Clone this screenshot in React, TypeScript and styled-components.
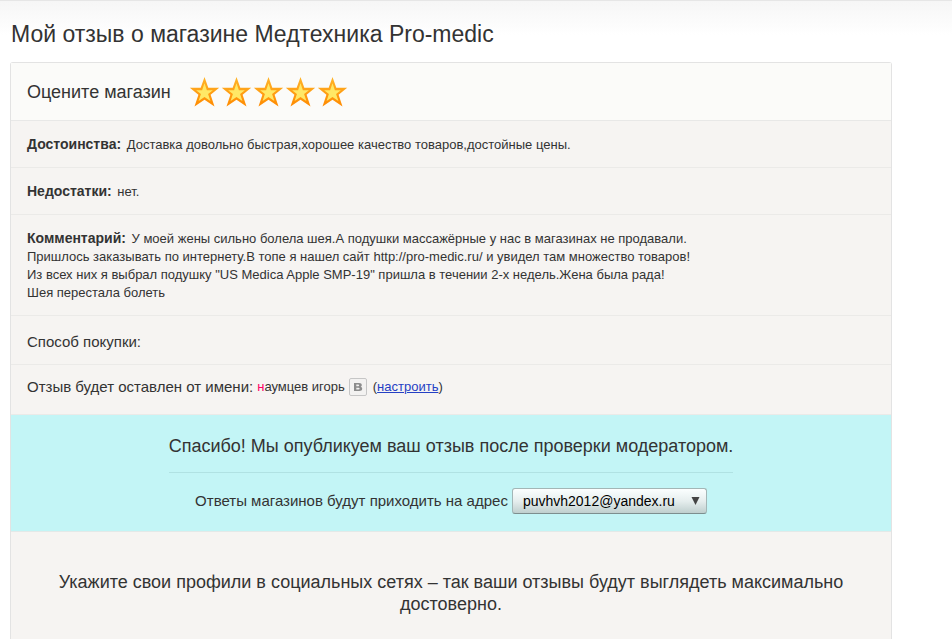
import React, { useState } from 'react';
import styled, { createGlobalStyle } from 'styled-components';

const GlobalStyle = createGlobalStyle`
  * { box-sizing: border-box; }
  body {
    margin: 0;
    background: #fff;
    color: #333;
    font-family: "Liberation Sans", Arial, sans-serif;
    font-size: 13px;
    line-height: 18px;
  }
`;

const Page = styled.main`
  min-height: 100vh;
  padding: 20px 60px 0 10px;
  border-top: 1px solid #e6e6e6;
  background: linear-gradient(#f6f6f6, #fff 34px) no-repeat;
`;

const Title = styled.h1`
  margin: 0 0 15px 1px;
  font-size: 23px;
  line-height: 26px;
  font-weight: 400;
`;

const Panel = styled.section`
  border: 1px solid #e3e3e3;
  border-bottom: 0;
  border-radius: 3px 3px 0 0;
  background: #f6f4f2;
`;

const Rating = styled.div`
  display: flex;
  align-items: center;
  gap: 18px;
  height: 58px;
  padding: 0 16px;
  border-bottom: 1px solid #e8e8e7;
  background: #fbfbf9;
`;

const RatingTitle = styled.h2`
  margin: 0;
  font-size: 18px;
  line-height: 22px;
  font-weight: 400;
`;

const Stars = styled.div`
  display: flex;
`;

const StarLabel = styled.label`
  position: relative;
  display: block;
  width: 32px;
  height: 30px;
  cursor: pointer;
`;

const StarInput = styled.input`
  position: absolute;
  inset: 0;
  margin: 0;
  opacity: 0;
  cursor: pointer;
`;

const Row = styled.div`
  padding: 15px 16px 13px;
  border-bottom: 1px solid #ebeae8;
  white-space: pre-line;
`;

const Term = styled.strong`
  margin-right: 2px;
  font-size: 14px;
  line-height: 16px;
`;

const Purchase = styled.div`
  padding: 17px 16px 13px;
  border-bottom: 1px solid #ebeae8;
  font-size: 15px;
`;

const Author = styled.div`
  display: flex;
  align-items: center;
  height: 50px;
  padding: 0 16px 6px;
  border-bottom: 1px solid #ebeae8;
`;

const Caption = styled.span`
  font-size: 15px;
`;

const Name = styled.span`
  display: inline-block;
  margin: 0 4px;

  &::first-letter { color: #f06; }
`;

const VkBadge = styled.svg`
  display: block;
  width: 18px;
  height: 18px;
  margin-right: 6px;
`;

const SetupLink = styled.a`
  color: #2540c4;
`;

const Notice = styled.div`
  display: flex;
  flex-direction: column;
  align-items: center;
  padding: 20px 16px 17px;
  border-bottom: 1px solid #e3e9e8;
  background: #c3f5f6;
`;

const Thanks = styled.p`
  margin: 0;
  padding-bottom: 15px;
  border-bottom: 1px solid #b0e2e3;
  font-size: 18px;
  line-height: 22px;
`;

const Reply = styled.div`
  display: flex;
  align-items: center;
  gap: 4px;
  padding-top: 15px;
  font-size: 15px;
`;

const SelectWrap = styled.span`
  position: relative;
  display: block;
`;

const Select = styled.select`
  display: block;
  height: 26px;
  width: 195px;
  padding: 0 22px 0 10px;
  border: 1px solid #a3b6b6;
  border-bottom-color: #7d8e8e;
  border-radius: 3px;
  appearance: none;
  background: linear-gradient(#fbffff, #e6eeee 50%, #bfcfce);
  color: #000;
  font: 14px/24px "Liberation Sans", Arial, sans-serif;
`;

const Arrow = styled.svg`
  position: absolute;
  top: 9px;
  right: 7px;
  width: 9px;
  height: 8px;
  pointer-events: none;
`;

const Social = styled.h2`
  margin: 0;
  padding: 39px 40px 24px;
  font-size: 18px;
  line-height: 22px;
  font-weight: 400;
  text-align: center;
`;

function Star({ filled }: { filled: boolean }) {
  return (
    <svg width="32" height="30" viewBox="0 0 32 30" aria-hidden="true">
      <defs>
        <linearGradient id="starEdge" x1="0" y1="0" x2="0" y2="1">
          <stop offset="0" stopColor="#ffb52b" />
          <stop offset="1" stopColor="#ff8a00" />
        </linearGradient>
      </defs>
      <path
        d="M15.5 0 19.3 10.8H30.2L21.6 17.8 25.5 29.6 15.5 22.8 5.5 29.6 9.4 17.8 0.8 10.8H11.7Z"
        fill={filled ? 'url(#starEdge)' : '#ddd'}
      />
      <path
        d="M15.5 6.2 17.9 13.2H23.9L19.1 17 21.4 23.9 15.5 19.9 9.6 23.9 11.9 17 7.1 13.2H13.1Z"
        fill={filled ? '#ffe866' : '#f5f5f5'}
      />
    </svg>
  );
}

const COMMENT =
  'У моей жены сильно болела шея.А подушки массажёрные у нас в магазинах не продавали.\n' +
  'Пришлось заказывать по интернету.В топе я нашел сайт http://pro-medic.ru/ и увидел там множество товаров!\n' +
  'Из всех них я выбрал подушку "US Medica Apple SMP-19" пришла в течении 2-х недель.Жена была рада!\n' +
  'Шея перестала болеть';

export default function App() {
  const [rating, setRating] = useState(5);

  return (
    <>
      <GlobalStyle />
      <Page>
        <Title>Мой отзыв о магазине Медтехника Pro-medic</Title>
        <Panel>
          <Rating>
            <RatingTitle id="rating-title">Оцените магазин</RatingTitle>
            <Stars role="radiogroup" aria-labelledby="rating-title">
              {[1, 2, 3, 4, 5].map(n => (
                <StarLabel key={n}>
                  <StarInput
                    type="radio"
                    name="rating"
                    value={n}
                    aria-label={String(n)}
                    checked={rating === n}
                    onChange={() => setRating(n)}
                  />
                  <Star filled={n <= rating} />
                </StarLabel>
              ))}
            </Stars>
          </Rating>
          <Row>
            <Term>Достоинства:</Term> Доставка довольно быстрая,хорошее качество товаров,достойные цены.
          </Row>
          <Row>
            <Term>Недостатки:</Term> нет.
          </Row>
          <Row>
            <Term>Комментарий:</Term> {COMMENT}
          </Row>
          <Purchase>Способ покупки:</Purchase>
          <Author>
            <Caption>Отзыв будет оставлен от имени:</Caption>
            <Name>наумцев игорь</Name>
            <VkBadge viewBox="0 0 18 18" role="img" aria-label="ВКонтакте">
              <rect x="0.5" y="0.5" width="17" height="17" rx="1.5" fill="#f3f2f1" stroke="#c6c6c6" />
              <path
                fillRule="evenodd"
                fill="#8c8c8c"
                d="M5 5H10C12 5 12.8 5.8 12.8 7 12.8 7.9 12.4 8.5 11.6 8.8 12.7 9.1 13.2 9.8 13.2 10.8 13.2 12.3 12.1 13 10.2 13H5ZM7.3 6.5V8.2H9.2C10.5 8.2 10.5 6.5 9.2 6.5ZM7.3 9.7V11.5H9.5C11 11.5 11 9.7 9.5 9.7Z"
              />
            </VkBadge>
            <span>
              (<SetupLink href="#profile">настроить</SetupLink>)
            </span>
          </Author>
          <Notice>
            <Thanks>Спасибо! Мы опубликуем ваш отзыв после проверки модератором.</Thanks>
            <Reply>
              <label htmlFor="reply-email">Ответы магазинов будут приходить на адрес</label>
              <SelectWrap>
                <Select id="reply-email">
                  <option>puvhvh2012@yandex.ru</option>
                </Select>
                <Arrow viewBox="0 0 9 8" aria-hidden="true">
                  <path d="M0.5 0H8.5L4.5 8Z" fill="#444" />
                </Arrow>
              </SelectWrap>
            </Reply>
          </Notice>
          <Social>
            Укажите свои профили в социальных сетях – так ваши отзывы будут выглядеть максимально достоверно.
          </Social>
        </Panel>
      </Page>
    </>
  );
}
